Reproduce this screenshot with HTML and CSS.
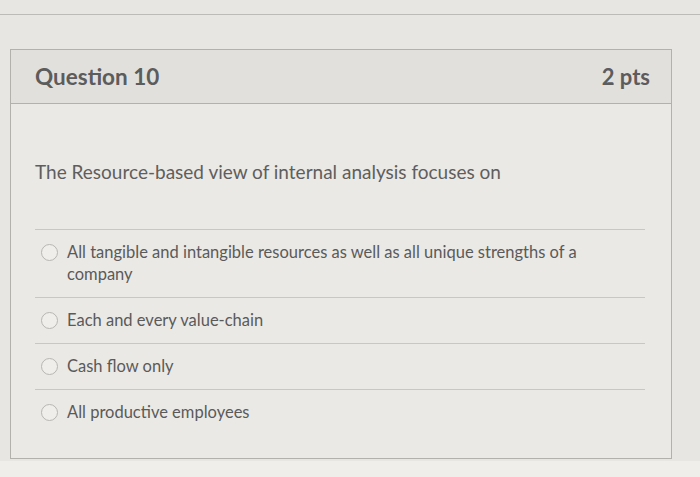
FILE: index.html
```html
<!DOCTYPE html>
<html lang="en">
<head>
<meta charset="utf-8">
<title>Question 10</title>
<link rel="stylesheet" href="styles.css">
</head>
<body>
<div class="screen">
  <div class="topbar"></div>
  <section class="question">
    <header class="q-header">
      <h2 class="q-title">Question 10</h2>
      <span class="q-points">2 pts</span>
    </header>
    <div class="q-body">
      <p class="q-text">The Resource-based view of internal analysis focuses on</p>
      <ul class="answers">
        <li class="answer"><span class="radio"></span><span class="answer-text">All tangible and intangible resources as well as all unique strengths of a company</span></li>
        <li class="answer"><span class="radio"></span><span class="answer-text">Each and every value-chain</span></li>
        <li class="answer"><span class="radio"></span><span class="answer-text">Cash flow only</span></li>
        <li class="answer"><span class="radio"></span><span class="answer-text">All productive employees</span></li>
      </ul>
    </div>
  </section>
  <div class="bottom"></div>
</div>
</body>
</html>
```
FILE: styles.css
```css
html, body {
  margin: 0;
  padding: 0;
  height: 100%;
}
body {
  background: #e8e6e2;
  font-family: Lato, "Open Sans", sans-serif;
  color: #5b5b5b;
  overflow: hidden;
}
.screen {
  width: 700px;
  height: 477px;
  display: flex;
  flex-direction: column;
}
.topbar {
  height: 14px;
  border-bottom: 1px solid #bdbbb7;
  flex: none;
}
.question {
  margin: 34px 0 0 10px;
  width: 660px;
  border: 1px solid #b3b1ac;
  background: #ebe9e5;
  flex: none;
}
.q-header {
  display: flex;
  align-items: center;
  justify-content: space-between;
  height: 53px;
  padding: 0 21px 0 24px;
  background: #e2e0dc;
  border-bottom: 1px solid #b3b1ac;
}
.q-title {
  margin: 0;
  font-size: 22.5px;
  font-weight: 700;
  color: #5c5c5c;
}
.q-points {
  font-size: 22px;
  font-weight: 700;
  color: #5c5c5c;
}
.q-body {
  padding: 56px 26px 23px 24px;
}
.q-text {
  margin: 0;
  font-size: 19px;
  line-height: 24px;
  color: #5e5e5e;
}
.answers {
  list-style: none;
  margin: 45px 0 0 0;
  padding: 0;
  border-top: 1px solid #c9c7c2;
}
.answer {
  display: flex;
  align-items: flex-start;
  padding: 11px 50px 12px 6px;
  border-bottom: 1px solid #c9c7c2;
  font-size: 16.5px;
  line-height: 22px;
}
.answer:last-child {
  border-bottom: none;
}
.radio {
  flex: none;
  width: 15px;
  height: 15px;
  border: 1px solid #b8b6b2;
  border-radius: 50%;
  background: #efeeeb;
  margin: 3px 9px 0 0;
}
.answer-text {
  color: #5a5a5a;
}
.bottom {
  flex: 1;
  margin-top: 2px;
  background: #efeeea;
}
```
